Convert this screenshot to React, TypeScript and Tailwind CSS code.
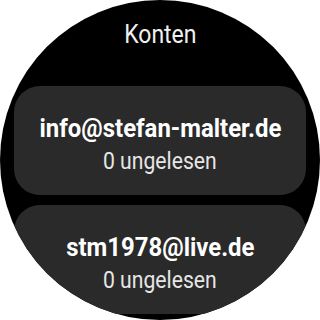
const accounts = [
  { email: "info@stefan-malter.de", unread: 0 },
  { email: "stm1978@live.de", unread: 0 },
];

export default function App() {
  return (
    <div className="w-[320px] h-[320px] bg-white" style={{ fontFamily: "Roboto, sans-serif" }}>
      <div className="w-full h-full rounded-full bg-black overflow-hidden flex flex-col items-center">
        <div className="h-[86px] pt-[20px]">
          <div className="text-[25px] leading-[30px] text-[#f0f0f0] scale-x-[0.92] whitespace-nowrap">Konten</div>
        </div>
        <div className="w-[292px] flex flex-col gap-[10px]">
          {accounts.map((a) => (
            <div
              key={a.email}
              className="h-[109px] rounded-[26px] bg-[#2a2a2a] flex flex-col items-center pt-[27px]"
            >
              <div className="text-[26px] leading-[30px] font-bold text-white scale-x-[0.92] whitespace-nowrap">
                {a.email}
              </div>
              <div className="mt-[4px] text-[23px] leading-[30px] text-[#e6e6e6] scale-x-[0.92] whitespace-nowrap">
                {a.unread} ungelesen
              </div>
            </div>
          ))}
        </div>
      </div>
    </div>
  );
}
